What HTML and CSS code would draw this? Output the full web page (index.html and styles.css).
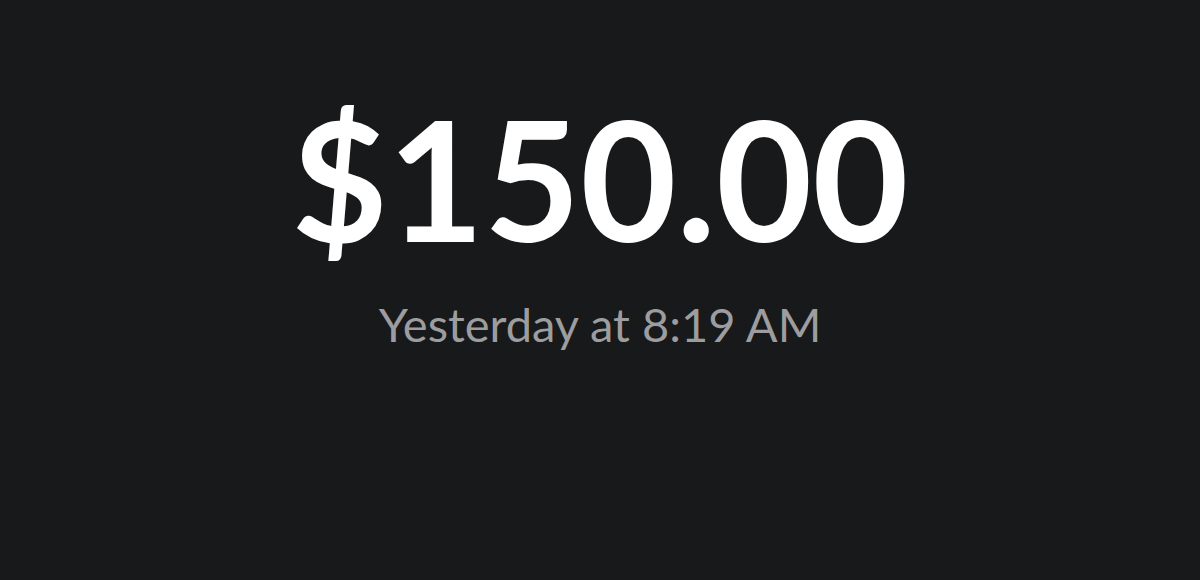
FILE: index.html
```html
<!DOCTYPE html>
<html lang="en">
<head>
    <meta charset="UTF-8">
    <meta name="viewport" content="width=device-width, initial-scale=1.0">
    <title>Payment</title>
    <link rel="stylesheet" href="styles.css">
</head>
<body>
    <div class="receipt">
        <h1 class="amount">$150.00</h1>
        <p class="when">Yesterday at 8:19 AM</p>
    </div>
</body>
</html>
```

FILE: styles.css
```css
html, body {
    height: 100%;
}
body {
    margin: 0;
    padding: 0;
    background-color: #18191b;
    font-family: Lato, "Noto Sans", sans-serif;
}
.receipt {
    display: flex;
    flex-direction: column;
    align-items: center;
    padding-top: 78px;
}
.amount {
    margin: 0;
    font-size: 166px;
    font-weight: 700;
    line-height: 1.2;
    color: #ffffff;
}
.when {
    margin: 19px 0 0;
    font-size: 47px;
    line-height: 1.2;
    color: #9d9d9f;
}
```
